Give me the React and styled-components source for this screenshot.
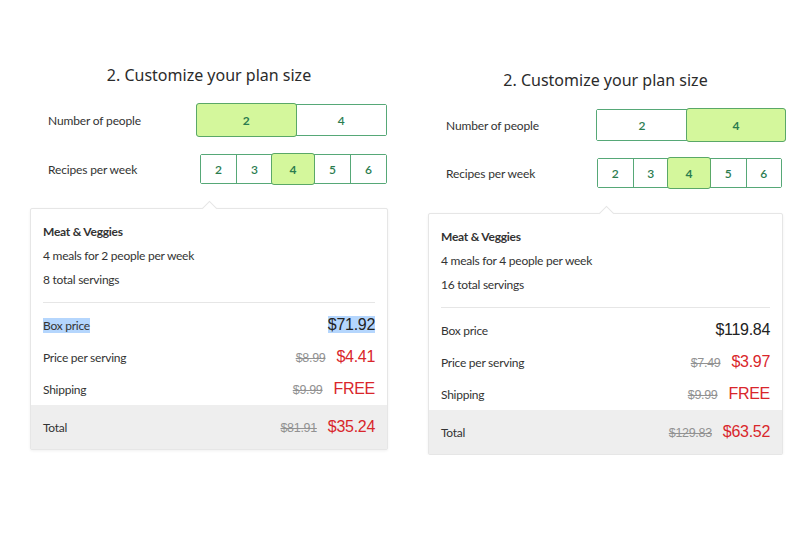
import React from "react";
import styled, { createGlobalStyle } from "styled-components";

const Global = createGlobalStyle`
  html, body { margin: 0; padding: 0; background: #ffffff; }
  body { font-family: "Lato", "Noto Sans", sans-serif; color: #333; }
`;

const Page = styled.div`
  display: flex;
  align-items: flex-start;
  padding: 65px 0 0 30px;
  gap: 40px;
`;

const Panel = styled.section`
  width: ${(p) => p.$w}px;
  margin-top: ${(p) => p.$top}px;
  display: flex;
  flex-direction: column;
`;

const Heading = styled.h2`
  margin: 0;
  font-family: "Noto Sans", "DejaVu Sans", sans-serif;
  font-weight: 400;
  font-size: 16px;
  line-height: 20px;
  color: #2b2b2b;
  text-align: center;
`;

const OptionRow = styled.div`
  display: flex;
  align-items: center;
  justify-content: space-between;
  padding-left: ${(p) => p.$pl}px;
  margin-right: ${(p) => p.$mr}px;
  margin-top: ${(p) => p.$mt}px;
`;

const Label = styled.span`
  font-family: "Lato", sans-serif;
  font-size: 12px;
  letter-spacing: -0.15px;
  color: #333;
`;

const Toggle = styled.div`
  display: flex;
  width: ${(p) => p.$w}px;
  height: ${(p) => p.$h}px;
  border: 1px solid #56a877;
  border-radius: 2px;
  box-sizing: border-box;
`;

const Cell = styled.button`
  flex: ${(p) => (p.$on ? "0 0 " + p.$onw + "px" : "1 1 0")};
  margin: ${(p) => (p.$on ? "-2px -1px" : "0")};
  position: relative;
  z-index: ${(p) => (p.$on ? 1 : 0)};
  border: none;
  border-left: ${(p) => (p.$first ? "none" : "1px solid #56a877")};
  ${(p) => p.$on && `border: 1px solid #5aa867; border-radius: 3px;`}
  background: ${(p) => (p.$on ? "#d4f79c" : "#ffffff")};
  color: #2b7c4f;
  font-family: "Lato", sans-serif;
  font-weight: ${(p) => (p.$on ? 700 : 600)};
  font-size: 12px;
  padding: 0;
  cursor: pointer;
  box-sizing: border-box;
`;

const Card = styled.div`
  position: relative;
  margin-top: ${(p) => p.$mt}px;
  background: #fff;
  border: 1px solid #e6e6e6;
  border-radius: 2px;
  box-shadow: 0 1px 3px rgba(0, 0, 0, 0.06);
  font-family: "Lato", sans-serif;
  letter-spacing: -0.25px;
  &::before {
    content: "";
    position: absolute;
    top: -6px;
    left: 50%;
    width: 10px;
    height: 10px;
    margin-left: -5px;
    background: #fff;
    border-left: 1px solid #e6e6e6;
    border-top: 1px solid #e6e6e6;
    transform: rotate(45deg);
  }
`;

const Summary = styled.div`
  margin: 0 12px;
  padding: 11px 0 10px;
  border-bottom: 1px solid #e6e6e6;
`;

const SummaryLine = styled.div`
  font-size: 12px;
  line-height: 24px;
  color: #333;
  font-weight: ${(p) => (p.$bold ? 700 : 400)};
`;

const Rows = styled.div`
  padding: 6px 12px 0;
`;

const PriceRow = styled.div`
  display: flex;
  align-items: center;
  justify-content: space-between;
  height: 32px;
`;

const TotalRow = styled(PriceRow)`
  height: 44px;
  padding: 0 12px;
  background: #eeeeee;
`;

const RowLabel = styled.span`
  font-size: 12px;
  color: #333;
`;

const Prices = styled.span`
  display: flex;
  align-items: baseline;
  gap: 11px;
  font-family: "Liberation Sans", Arial, sans-serif;
  letter-spacing: -0.3px;
`;

const Old = styled.s`
  font-size: 12.5px;
  color: #929292;
`;

const Price = styled.span`
  font-size: 16px;
  color: ${(p) => (p.$red ? "#d9262b" : "#222")};
`;

const Hl = styled.span`
  background: ${(p) => (p.$on ? "#b5d6fd" : "transparent")};
`;

function PlanPanel({ w, top, people, recipes, meals, servings, box, perOld, per, total, totalOld, hl, geo }) {
  return (
    <Panel $w={w} $top={top}>
      <Heading>2. Customize your plan size</Heading>
      <OptionRow $pl={geo.pl} $mr={geo.mr1} $mt={19}>
        <Label>Number of people</Label>
        <Toggle $w={geo.t1} $h={32}>
          {[2, 4].map((n, i) => (
            <Cell key={n} $first={i === 0} $on={n === people} $onw={geo.t1 / 2 + 5}>
              {n}
            </Cell>
          ))}
        </Toggle>
      </OptionRow>
      <OptionRow $pl={geo.pl} $mr={geo.mr2} $mt={geo.mt2}>
        <Label>Recipes per week</Label>
        <Toggle $w={geo.t2} $h={30}>
          {[2, 3, 4, 5, 6].map((n, i) => (
            <Cell key={n} $first={i === 0} $on={n === recipes} $onw={44}>
              {n}
            </Cell>
          ))}
        </Toggle>
      </OptionRow>
      <Card $mt={geo.cardMt}>
        <Summary>
          <SummaryLine $bold>Meat &amp; Veggies</SummaryLine>
          <SummaryLine>{meals}</SummaryLine>
          <SummaryLine>{servings}</SummaryLine>
        </Summary>
        <Rows>
          <PriceRow>
            <RowLabel>
              <Hl $on={hl}>Box price</Hl>
            </RowLabel>
            <Prices>
              <Price>
                <Hl $on={hl}>{box}</Hl>
              </Price>
            </Prices>
          </PriceRow>
          <PriceRow>
            <RowLabel>Price per serving</RowLabel>
            <Prices>
              <Old>{perOld}</Old>
              <Price $red>{per}</Price>
            </Prices>
          </PriceRow>
          <PriceRow>
            <RowLabel>Shipping</RowLabel>
            <Prices>
              <Old>$9.99</Old>
              <Price $red>FREE</Price>
            </Prices>
          </PriceRow>
        </Rows>
        <TotalRow>
          <RowLabel>Total</RowLabel>
          <Prices>
            <Old>{totalOld}</Old>
            <Price $red>{total}</Price>
          </Prices>
        </TotalRow>
      </Card>
    </Panel>
  );
}

export default function App() {
  return (
    <>
      <Global />
      <Page>
        <PlanPanel
          w={358}
          top={0}
          people={2}
          recipes={4}
          meals="4 meals for 2 people per week"
          servings="8 total servings"
          box="$71.92"
          perOld="$8.99"
          per="$4.41"
          totalOld="$81.91"
          total="$35.24"
          hl
          geo={{ pl: 18, mr1: 1, mr2: 1, t1: 191, t2: 187, mt2: 18, cardMt: 24 }}
        />
        <PlanPanel
          w={355}
          top={5}
          people={4}
          recipes={4}
          meals="4 meals for 4 people per week"
          servings="16 total servings"
          box="$119.84"
          perOld="$7.49"
          per="$3.97"
          totalOld="$129.83"
          total="$63.52"
          geo={{ pl: 18, mr1: -3, mr2: 1, t1: 190, t2: 185, mt2: 17, cardMt: 25 }}
        />
      </Page>
    </>
  );
}
